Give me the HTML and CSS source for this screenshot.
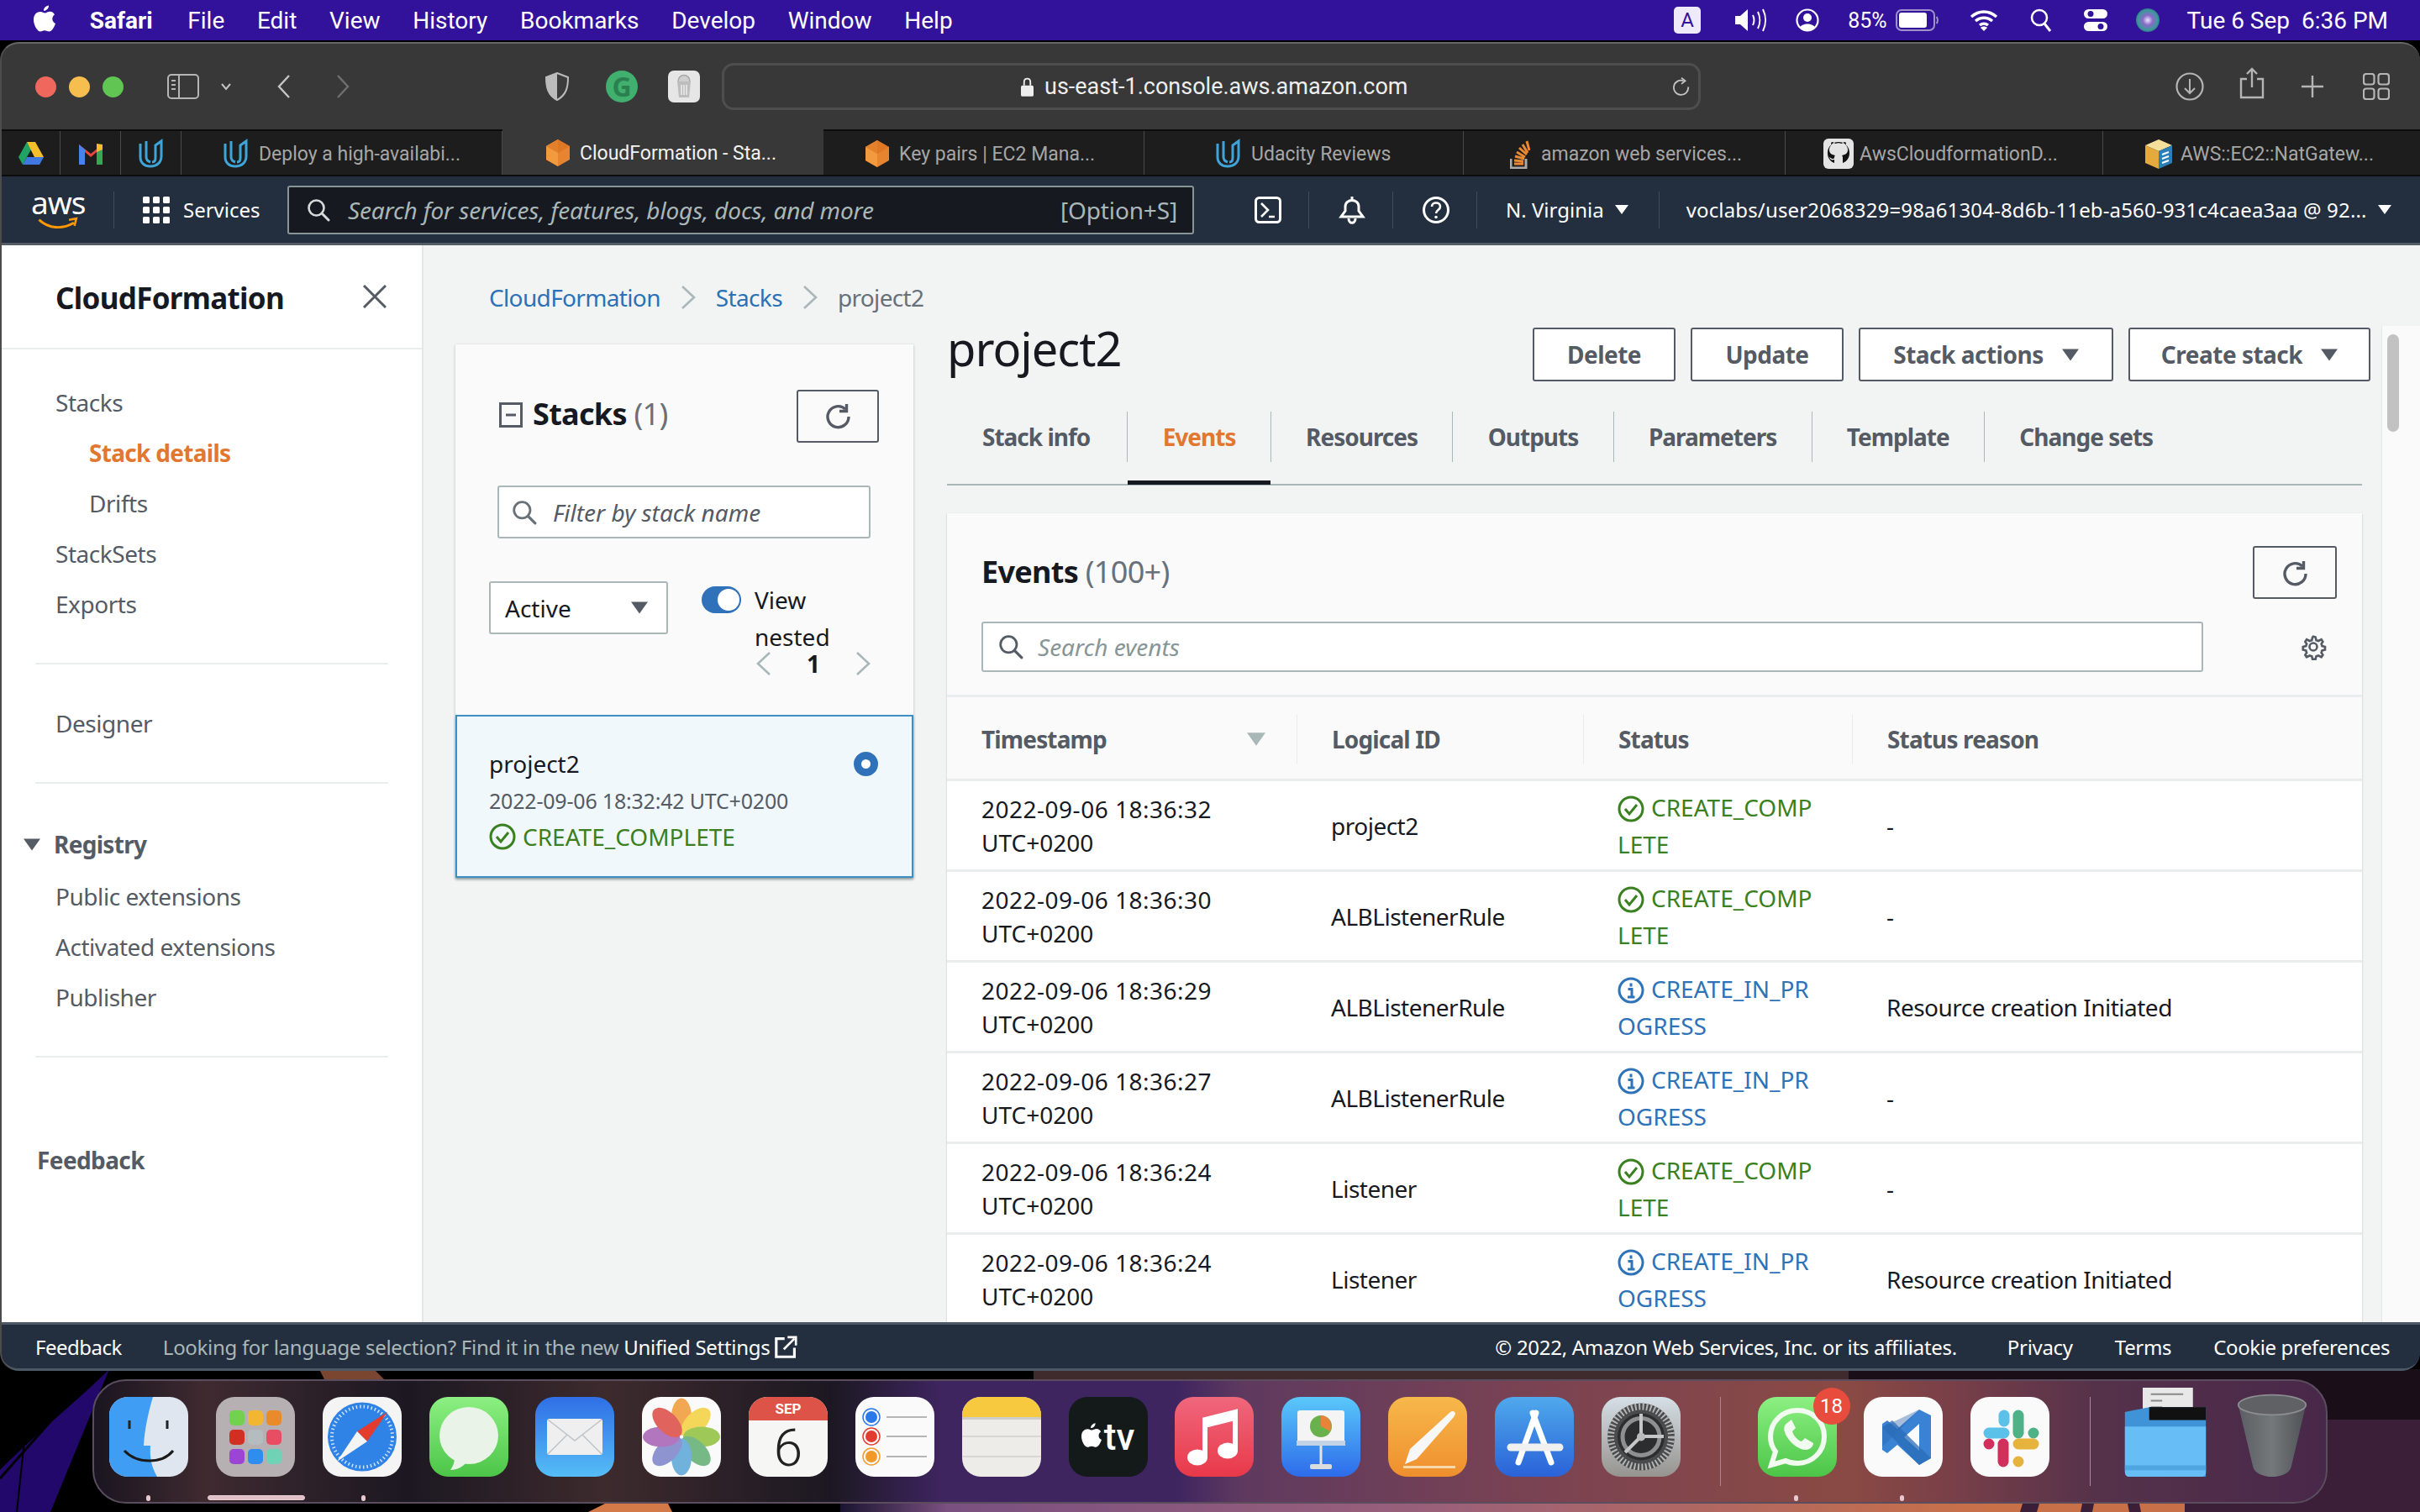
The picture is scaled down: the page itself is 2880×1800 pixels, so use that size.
FILE: index.html
```html
<!DOCTYPE html>
<html lang="en">
<head>
<meta charset="utf-8">
<title>CloudFormation - Stacks</title>
<link rel="stylesheet" href="styles.css">
</head>
<body>
<svg class="defs" aria-hidden="true">
  <defs>
    <linearGradient id="gBlue" x1="0" y1="0" x2="0" y2="1"><stop offset="0" stop-color="#2f6fe6"/><stop offset="1" stop-color="#55bdf7"/></linearGradient>
    <linearGradient id="gBlue2" x1="0" y1="0" x2="0" y2="1"><stop offset="0" stop-color="#5ac8fa"/><stop offset="1" stop-color="#2d6bea"/></linearGradient>
    <linearGradient id="gGreen" x1="0" y1="0" x2="0" y2="1"><stop offset="0" stop-color="#8cf082"/><stop offset="1" stop-color="#4cc548"/></linearGradient>
    <linearGradient id="gMusic" x1="0" y1="0" x2="0" y2="1"><stop offset="0" stop-color="#f0677c"/><stop offset="1" stop-color="#e8394a"/></linearGradient>
    <linearGradient id="gPages" x1="0" y1="0" x2="0" y2="1"><stop offset="0" stop-color="#f7b84a"/><stop offset="1" stop-color="#ef8f2e"/></linearGradient>
    <linearGradient id="gGray" x1="0" y1="0" x2="0" y2="1"><stop offset="0" stop-color="#d5dfe6"/><stop offset="1" stop-color="#96948f"/></linearGradient>
    <linearGradient id="gTrash" x1="0" y1="0" x2="1" y2="0"><stop offset="0" stop-color="#5b5f63"/><stop offset=".5" stop-color="#74787b"/><stop offset="1" stop-color="#4e5256"/></linearGradient>
    <linearGradient id="gAppStore" x1="0" y1="0" x2="0" y2="1"><stop offset="0" stop-color="#4fa9ec"/><stop offset="1" stop-color="#2a62d8"/></linearGradient>
    <linearGradient id="gStrip" x1="0" y1="0" x2="1" y2="0"><stop offset="0" stop-color="#1a1430"/><stop offset=".08" stop-color="#7a5080"/><stop offset=".44" stop-color="#9a607a"/><stop offset=".69" stop-color="#b5695c"/><stop offset=".85" stop-color="#c87048"/><stop offset="1" stop-color="#c87048"/></linearGradient>
    <symbol id="u-logo" viewBox="0 0 32 36"><path d="M3 6v16c0 7 5 11 12 11 8 0 13-5 13-12V3l-7 5v15c0 3-1 5-4 5" fill="none" stroke="#3fa4d8" stroke-width="3"/><path d="M10 3v19c0 3 2 5 5 6" fill="none" stroke="#3fa4d8" stroke-width="3"/></symbol>
    <symbol id="aws-cube" viewBox="0 0 30 34"><path d="M15 1 29 9v16l-14 8L1 25V9z" fill="#e8832f"/><path d="M15 1v32L1 25V9z" fill="#f19a3e"/><path d="M15 1 29 9l-14 8L1 9z" fill="#d9701f" opacity=".6"/></symbol>
    <symbol id="search" viewBox="0 0 28 28"><circle cx="11.500" cy="11.500" r="9" fill="none" stroke="currentColor" stroke-width="2.600"/><path d="m18 18 8 8" stroke="currentColor" stroke-width="3" stroke-linecap="round"/></symbol>
    <symbol id="refresh" viewBox="0 0 32 32"><path d="M25 8a12.500 12.500 0 1 0 4 9" fill="none" stroke="currentColor" stroke-width="3.400"/><path d="M26.500 2v8.500H18" fill="none" stroke="currentColor" stroke-width="3.400"/></symbol>
    <symbol id="caret" viewBox="0 0 20 16"><path d="M0 1h20L10 15z" fill="currentColor"/></symbol>
    <symbol id="ok" viewBox="0 0 32 32"><circle cx="16" cy="16" r="14" fill="none" stroke="currentColor" stroke-width="3"/><path d="m9 16 5 6 9-11" fill="none" stroke="currentColor" stroke-width="3"/></symbol>
    <symbol id="info" viewBox="0 0 32 32"><circle cx="16" cy="16" r="14" fill="none" stroke="currentColor" stroke-width="3"/><path d="M16 7.500v4M12.500 14.500H17v9M12 24h8.500" fill="none" stroke="currentColor" stroke-width="3"/></symbol>
    <symbol id="chev-r" viewBox="0 0 18 30"><path d="m2 2 14 13L2 28" fill="none" stroke="currentColor" stroke-width="2.600"/></symbol>
    <symbol id="chev-l" viewBox="0 0 18 30"><path d="M16 2 2 15l14 13" fill="none" stroke="currentColor" stroke-width="2.600"/></symbol>
  </defs>
</svg>

<div class="screen">
  <svg class="wallpaper" viewBox="0 0 2880 170" preserveAspectRatio="none" aria-hidden="true">
    <rect width="2880" height="170" fill="#000"/>
    <path d="M0 120C50 70 90 40 130 0L60 170H0z" fill="#22086b"/>
    <path d="M0 130 115 0" stroke="#000" stroke-width="3"/>
    <path d="M20 170 38 0" stroke="#000" stroke-width="2"/>
    <path d="M380 0h65l20 20H390z" fill="#7a4630"/>
    <path d="M700 170l50-25 40 5 10 20z" fill="#d47a48"/>
    <rect x="1230" width="970" height="30" fill="#3f2a2e"/>
    <rect x="2200" width="680" height="170" fill="#1a0f18"/>
    <rect x="2600" y="60" width="280" height="110" fill="#3b1f38"/>
    <rect x="1000" y="150" width="1600" height="20" fill="url(#gStrip)"/>
    <path d="M2410 150h20l-6 20h-20zM2480 150h14l-4 20h-14zM2530 150h14l4 20h-14z" fill="#3b1f38"/>
  </svg>

  <header class="menubar">
    <div class="menu-left">
      <svg class="apple" viewBox="0 0 26 32"><path d="M18 0c.3 3-2.500 6.500-6 6.300C11.700 3.200 15 .3 18 0zM25 11c-4 2.500-3.500 8.500 1 10.500-1.500 4.500-4.500 9.500-7.500 9.500-2 0-3-1.300-5.500-1.300S10 31 8 31C4.500 31 0 23.500 0 17 0 10.500 4 7.500 8 7.500c2.300 0 4 1.500 5.500 1.500s3.500-1.700 6-1.700c2 0 4.200 1 5.500 3.700z" fill="#fff"/></svg>
      <b class="mi-app">Safari</b>
      <span>File</span><span>Edit</span><span>View</span><span>History</span><span>Bookmarks</span><span>Develop</span><span>Window</span><span>Help</span>
    </div>
    <div class="menu-right">
      <span class="kbd">A</span>
      <svg class="st-speaker" viewBox="0 0 38 28"><path d="M1 9h6l9-8v26l-9-8H1z" fill="#fff"/><path d="M22 8c2 4 2 8 0 12M28 4c3 6 3 14 0 20M34 1c4 8 4 18 0 26" fill="none" stroke="#fff" stroke-width="2"/></svg>
      <svg class="st-user" viewBox="0 0 28 28"><circle cx="14" cy="14" r="12.500" fill="none" stroke="#fff" stroke-width="2.200"/><circle cx="14" cy="11" r="5" fill="#fff"/><path d="M5 23c2-6 16-6 18 0-4 4-14 4-18 0z" fill="#fff"/></svg>
      <span class="pct">85%</span>
      <svg class="st-battery" viewBox="0 0 52 26"><rect x="1" y="1" width="45" height="24" rx="6" fill="none" stroke="#9e93c9" stroke-width="2"/><rect x="4" y="4" width="33" height="18" rx="3" fill="#fff"/><path d="M48.500 9c2 2 2 6 0 8" fill="none" stroke="#9e93c9" stroke-width="2"/></svg>
      <svg class="st-wifi" viewBox="0 0 34 26"><path d="M2 9c9-8 21-8 30 0M7 14c6-5 14-5 20 0M12 19c3-2.500 7-2.500 10 0" fill="none" stroke="#fff" stroke-width="3.400"/><path d="m17 26-4-4c2-2 6-2 8 0z" fill="#fff"/></svg>
      <svg class="st-search" viewBox="0 0 26 28"><circle cx="11" cy="11" r="9" fill="none" stroke="#fff" stroke-width="2.500"/><path d="m17 18 7 9" stroke="#fff" stroke-width="3"/></svg>
      <svg class="st-cc" viewBox="0 0 28 28"><rect x="0" y="1" width="28" height="11" rx="5.500" fill="#fff"/><circle cx="8" cy="6.500" r="3.500" fill="#33129b"/><rect x="0" y="16" width="28" height="11" rx="5.500" fill="#fff"/><circle cx="20" cy="21.500" r="3.500" fill="#33129b"/></svg>
      <span class="siri"></span>
      <span class="clock">Tue 6 Sep&nbsp; 6:36 PM</span>
    </div>
  </header>

  <div class="window">
    <div class="toolbar">
      <div class="lights"><i class="l-red"></i><i class="l-yellow"></i><i class="l-green"></i></div>
      <svg class="tb-sidebar" viewBox="0 0 38 30"><rect x="1" y="1" width="36" height="28" rx="4" fill="none" stroke="#b5b5b5" stroke-width="2"/><path d="M14 1v28" stroke="#b5b5b5" stroke-width="2"/><path d="M5 8h5M5 13h5M5 18h5" stroke="#b5b5b5" stroke-width="2"/></svg>
      <svg class="tb-drop" viewBox="0 0 14 10"><path d="m2 2 5 6 5-6" fill="none" stroke="#c4c4c4" stroke-width="2"/></svg>
      <svg class="tb-back" viewBox="0 0 18 30"><path d="M15 2 3 15l12 13" fill="none" stroke="#c4c4c4" stroke-width="2.400"/></svg>
      <svg class="tb-fwd" viewBox="0 0 18 30"><path d="m3 2 12 13L3 28" fill="none" stroke="#6f6f6f" stroke-width="2.400"/></svg>
      <svg class="tb-shield" viewBox="0 0 28 34"><path d="M14 1 27 6c0 12-2 21-13 27C3 27 1 18 1 6z" fill="#3c3c3c" stroke="#bbb" stroke-width="2"/><path d="M14 1 1 6c0 12 2 21 13 27z" fill="#bbb"/></svg>
      <span class="tb-g">G</span>
      <svg class="tb-bag" viewBox="0 0 38 38"><rect width="38" height="38" rx="7" fill="#e6e6e6"/><path d="M11 13h16l-2 19H13z" fill="#bdbdbd"/><path d="M12 13c0-10 14-10 14 0" fill="#cfcfcf" stroke="#a9a9a9" stroke-width="1.500"/><path d="M16 17v12M19 17v12M22 17v12" stroke="#eee" stroke-width="1.500"/></svg>
      <div class="urlbar">
        <svg class="lock" viewBox="0 0 16 24"><path d="M4 10V6c0-6 8-6 8 0v4" fill="none" stroke="#eee" stroke-width="2"/><rect y="10" width="16" height="14" rx="2" fill="#eee"/></svg>
        <span class="url">us-east-1.console.aws.amazon.com</span>
        <svg class="reload" viewBox="0 0 22 26"><path d="M14 5a9.500 9.500 0 1 0 6 8" fill="none" stroke="#c4c4c4" stroke-width="2"/><path d="M11 1l5 4-5 4" fill="none" stroke="#c4c4c4" stroke-width="2"/></svg>
      </div>
      <svg class="tb-dl" viewBox="0 0 34 34"><circle cx="17" cy="17" r="15.500" fill="none" stroke="#b5b5b5" stroke-width="2.200"/><path d="M17 8v17M11 19l6 6 6-6" fill="none" stroke="#b5b5b5" stroke-width="2"/></svg>
      <svg class="tb-share" viewBox="0 0 30 38"><path d="M9 14H2v22h26V14h-7" fill="none" stroke="#b5b5b5" stroke-width="2.400"/><path d="M15 24V2M9 8l6-6 6 6" fill="none" stroke="#b5b5b5" stroke-width="2.400"/></svg>
      <svg class="tb-plus" viewBox="0 0 26 26"><path d="M13 0v26M0 13h26" stroke="#b5b5b5" stroke-width="2.400"/></svg>
      <svg class="tb-grid" viewBox="0 0 32 32"><g fill="none" stroke="#b5b5b5" stroke-width="2.200"><rect x="1" y="1" width="12.500" height="12.500" rx="3"/><rect x="18.500" y="1" width="12.500" height="12.500" rx="3"/><rect x="1" y="18.500" width="12.500" height="12.500" rx="3"/><rect x="18.500" y="18.500" width="12.500" height="12.500" rx="3"/></g></svg>
    </div>

    <div class="tabbar">
      <div class="tab tab-pin">
        <svg class="fav-pin" viewBox="0 0 32 30"><path d="M11 1 1 19l5 9 10-18z" fill="#1fa463"/><path d="M21 1 31 19H20L11 1z" fill="#f5bf2c"/><path d="M6 28 11 19h20l-5 9z" fill="#3f78e0"/></svg>
      </div>
      <div class="tab tab-pin">
        <svg class="fav-pin" viewBox="0 0 32 28"><path d="M2 27V3l14 11L30 3v24h-7V12l-7 6-7-6v15z" fill="#e5483a"/><path d="M2 27V3l7 6v18z" fill="#4683ea"/><path d="M30 27V3l-7 6v18z" fill="#35a853"/><path d="m23 2 7 1v6l-7 3z" fill="#f5bd2c"/></svg>
      </div>
      <div class="tab tab-pin"><svg class="fav-u"><use href="#u-logo"/></svg></div>
      <div class="tab"><svg class="fav-u"><use href="#u-logo"/></svg><span>Deploy a high-availabi...</span></div>
      <div class="tab tab-active"><svg class="fav-c"><use href="#aws-cube"/></svg><span>CloudFormation - Sta...</span></div>
      <div class="tab"><svg class="fav-c"><use href="#aws-cube"/></svg><span>Key pairs | EC2 Mana...</span></div>
      <div class="tab tab-w84"><svg class="fav-u"><use href="#u-logo"/></svg><span>Udacity Reviews</span></div>
      <div class="tab tab-w55">
        <svg class="fav-so" viewBox="0 0 24 36"><path d="M1 24v11h18V24" fill="none" stroke="#aaa" stroke-width="3"/><path d="M5 30h11M5 26l11 1M6 21l11 3M8 16l10 6M11 11l9 8M15 7l6 10M20 3l3 11" stroke="#e88933" stroke-width="3"/></svg>
        <span>amazon web services...</span>
      </div>
      <div class="tab tab-w45">
        <svg class="fav-gh" viewBox="0 0 36 36"><rect width="36" height="36" rx="6" fill="#e4e4e4"/><path d="M18 4C10 4 5 10 5 17c0 6 3 10 8 12v-4c-3 1-5 0-6-3 3 2 5 3 6 1 0-1 0-2 1-3-5-1-7-3-7-7 0-2 1-4 2-5 0-2 0-3 1-4 2 0 3 1 4 2 3-1 5-1 8 0 1-1 2-2 4-2 1 1 1 2 1 4 1 1 2 3 2 5 0 4-2 6-7 7 1 1 1 2 1 4v5c5-2 8-6 8-12 0-7-5-13-13-13z" fill="#111"/></svg>
        <span>AwsCloudformationD...</span>
      </div>
      <div class="tab tab-w49">
        <svg class="fav-box" viewBox="0 0 34 36"><path d="M17 1 33 8 17 15 1 8z" fill="#f6df9b"/><path d="M1 8l16 7v21L1 29z" fill="#e5aa3d"/><path d="M33 8 17 15v21l16-7z" fill="#2b7fb8"/><path d="M21 19l8-3M21 24l8-3M21 29l8-3" stroke="#fff" stroke-width="2"/></svg>
        <span>AWS::EC2::NatGatew...</span>
      </div>
    </div>

    <nav class="awsnav">
      <div class="aws-logo">
        <span class="aws-word">aws</span>
        <svg class="aws-smile" viewBox="0 0 64 22"><path d="M1 5c16 15 38 16 57 5" fill="none" stroke="#f90" stroke-width="4"/><path d="M50 5l12-2-3 12" fill="none" stroke="#f90" stroke-width="3.500"/></svg>
      </div>
      <i class="nav-sep"></i>
      <svg class="nav-grid" viewBox="0 0 32 32"><g fill="#fff"><rect width="8" height="8" rx="1.500"/><rect x="12" width="8" height="8" rx="1.500"/><rect x="24" width="8" height="8" rx="1.500"/><rect y="12" width="8" height="8" rx="1.500"/><rect x="12" y="12" width="8" height="8" rx="1.500"/><rect x="24" y="12" width="8" height="8" rx="1.500"/><rect y="24" width="8" height="8" rx="1.500"/><rect x="12" y="24" width="8" height="8" rx="1.500"/><rect x="24" y="24" width="8" height="8" rx="1.500"/></g></svg>
      <span class="nav-services">Services</span>
      <div class="nav-search">
        <svg class="nav-search-ic"><use href="#search"/></svg>
        <em>Search for services, features, blogs, docs, and more</em>
        <span>[Option+S]</span>
      </div>
      <svg class="nav-term" viewBox="0 0 32 32"><rect x="1.500" y="1.500" width="29" height="29" rx="4" fill="none" stroke="#fff" stroke-width="3"/><path d="m8 8 8 8-8 8M17 24h7" fill="none" stroke="#fff" stroke-width="2.600"/></svg>
      <i class="nav-sep nav-sep-a"></i>
      <svg class="nav-bell" viewBox="0 0 32 34"><path d="M16 1v4M3 25h26l-5-7v-5c0-10-16-10-16 0v5zM12 27c0 7 8 7 8 0" fill="none" stroke="#fff" stroke-width="3"/></svg>
      <i class="nav-sep nav-sep-a"></i>
      <svg class="nav-help" viewBox="0 0 32 32"><circle cx="16" cy="16" r="14.500" fill="none" stroke="#fff" stroke-width="3"/><path d="M11 12c0-6 10-6 10 0 0 4-5 4-5 8" fill="none" stroke="#fff" stroke-width="2.600"/><circle cx="16" cy="24.500" r="1.800" fill="#fff"/></svg>
      <i class="nav-sep nav-sep-a"></i>
      <span class="nav-region">N. Virginia</span>
      <svg class="nav-caret"><use href="#caret"/></svg>
      <i class="nav-sep nav-sep-b"></i>
      <span class="nav-account">voclabs/user2068329=98a61304-8d6b-11eb-a560-931c4caea3aa @ 92...</span>
      <svg class="nav-caret nav-caret-b"><use href="#caret"/></svg>
    </nav>

    <div class="app">
      <aside class="side">
        <div class="side-head">
          <h2>CloudFormation</h2>
          <svg class="side-x" viewBox="0 0 28 28"><path d="m1 1 26 26M27 1 1 27" stroke="#545b64" stroke-width="3"/></svg>
        </div>
        <ul class="side-list side-first">
          <li>Stacks</li>
          <li class="sub active">Stack details</li>
          <li class="sub">Drifts</li>
          <li>StackSets</li>
          <li>Exports</li>
        </ul>
        <hr class="side-hr">
        <ul class="side-list"><li>Designer</li></ul>
        <hr class="side-hr">
        <div class="side-reg"><svg><use href="#caret"/></svg><b>Registry</b></div>
        <ul class="side-list side-reglist">
          <li>Public extensions</li>
          <li>Activated extensions</li>
          <li>Publisher</li>
        </ul>
        <hr class="side-hr side-hr-c">
        <b class="side-fb">Feedback</b>
      </aside>

      <main class="main">
        <div class="crumbs">
          <a>CloudFormation</a><svg class="crumb-ch"><use href="#chev-r"/></svg>
          <a>Stacks</a><svg class="crumb-ch"><use href="#chev-r"/></svg>
          <span>project2</span>
        </div>
        <div class="columns">
          <section class="stacks">
            <div class="stacks-head">
              <svg class="minus" viewBox="0 0 28 30"><rect x="1.500" y="1.500" width="25" height="27" fill="none" stroke="#545b64" stroke-width="3"/><path d="M8 15h12" stroke="#545b64" stroke-width="3"/></svg>
              <h3>Stacks <span>(1)</span></h3>
              <button class="icon-btn"><svg><use href="#refresh"/></svg></button>
            </div>
            <div class="filter"><svg><use href="#search"/></svg><em>Filter by stack name</em></div>
            <div class="stacks-ctrl">
              <div class="select"><span>Active</span><svg><use href="#caret"/></svg></div>
              <span class="toggle"><i></i></span>
              <div class="nested">View<br>nested</div>
            </div>
            <div class="pager">
              <svg><use href="#chev-l"/></svg><b>1</b><svg><use href="#chev-r"/></svg>
            </div>
            <div class="stack-card">
              <div class="card-top"><span>project2</span><i class="radio"></i></div>
              <div class="card-date">2022-09-06 18:32:42 UTC+0200</div>
              <div class="card-status"><svg><use href="#ok"/></svg>CREATE_COMPLETE</div>
            </div>
          </section>

          <section class="detail">
            <div class="detail-head">
              <h1>project2</h1>
              <div class="actions">
                <button class="btn btn-del">Delete</button>
                <button class="btn btn-upd">Update</button>
                <button class="btn btn-act">Stack actions<svg><use href="#caret"/></svg></button>
                <button class="btn btn-cre">Create stack<svg><use href="#caret"/></svg></button>
              </div>
            </div>
            <div class="tabs">
              <span class="t">Stack info</span>
              <span class="t t-on">Events</span>
              <span class="t">Resources</span>
              <span class="t">Outputs</span>
              <span class="t">Parameters</span>
              <span class="t">Template</span>
              <span class="t t-last">Change sets</span>
            </div>
            <div class="panel">
              <div class="panel-top">
                <h3>Events <span>(100+)</span></h3>
                <button class="icon-btn"><svg><use href="#refresh"/></svg></button>
              </div>
              <div class="panel-search">
                <div class="ev-search"><svg><use href="#search"/></svg><em>Search events</em></div>
                <svg class="gear" viewBox="0 0 32 32"><path d="M16 2l3 1 1 4 3 1 4-2 2 3-2 3 1 3 4 1v4l-4 1-1 3 2 3-2 3-4-2-3 1-1 4h-4l-1-4-3-1-4 2-2-3 2-3-1-3-4-1v-4l4-1 1-3-2-3 2-3 4 2 3-1 1-4z" transform="translate(2 2) scale(.875)" fill="none" stroke="#545b64" stroke-width="3"/><circle cx="16" cy="16" r="4.500" fill="none" stroke="#545b64" stroke-width="2.600"/></svg>
              </div>
              <div class="ev-row ev-head">
                <div class="th th-first"><span>Timestamp</span><svg><use href="#caret"/></svg></div>
                <div class="th"><span>Logical ID</span></div>
                <div class="th"><span>Status</span></div>
                <div class="th th-last"><span>Status reason</span></div>
              </div>
              <div class="ev-row">
                <div class="td"><span class="when">2022-09-06 18:36:32</span><br>UTC+0200</div><div class="td nm">project2</div>
                <div class="td st ok"><svg><use href="#ok"/></svg>CREATE_COMP<br>LETE</div><div class="td nm">-</div>
              </div>
              <div class="ev-row">
                <div class="td"><span class="when">2022-09-06 18:36:30</span><br>UTC+0200</div><div class="td nm">ALBListenerRule</div>
                <div class="td st ok"><svg><use href="#ok"/></svg>CREATE_COMP<br>LETE</div><div class="td nm">-</div>
              </div>
              <div class="ev-row">
                <div class="td"><span class="when">2022-09-06 18:36:29</span><br>UTC+0200</div><div class="td nm">ALBListenerRule</div>
                <div class="td st prog"><svg><use href="#info"/></svg>CREATE_IN_PR<br>OGRESS</div><div class="td nm">Resource creation Initiated</div>
              </div>
              <div class="ev-row">
                <div class="td"><span class="when">2022-09-06 18:36:27</span><br>UTC+0200</div><div class="td nm">ALBListenerRule</div>
                <div class="td st prog"><svg><use href="#info"/></svg>CREATE_IN_PR<br>OGRESS</div><div class="td nm">-</div>
              </div>
              <div class="ev-row">
                <div class="td"><span class="when">2022-09-06 18:36:24</span><br>UTC+0200</div><div class="td nm">Listener</div>
                <div class="td st ok"><svg><use href="#ok"/></svg>CREATE_COMP<br>LETE</div><div class="td nm">-</div>
              </div>
              <div class="ev-row">
                <div class="td"><span class="when">2022-09-06 18:36:24</span><br>UTC+0200</div><div class="td nm">Listener</div>
                <div class="td st prog"><svg><use href="#info"/></svg>CREATE_IN_PR<br>OGRESS</div><div class="td nm">Resource creation Initiated</div>
              </div>
            </div>
          </section>
        </div>
        <div class="scrolltrack"><i></i></div>
      </main>
    </div>

    <footer class="foot">
      <span class="f-fb">Feedback</span>
      <span class="f-msg">Looking for language selection? Find it in the new <span class="f-link">Unified Settings</span></span>
      <svg class="f-ext" viewBox="0 0 30 30"><path d="M13 4H2v24h24V16" fill="none" stroke="#fff" stroke-width="3.500"/><path d="M12 18 26 4M17 2h11v11" fill="none" stroke="#fff" stroke-width="3"/></svg>
      <span class="f-copy">© 2022, Amazon Web Services, Inc. or its affiliates.</span>
      <span class="f-l1">Privacy</span><span class="f-l2">Terms</span><span class="f-l3">Cookie preferences</span>
    </footer>
  </div>

  <div class="dock">
    <div class="ic"><svg viewBox="0 0 94 95"><defs><clipPath id="cf"><rect width="94" height="95" rx="22"/></clipPath></defs><g clip-path="url(#cf)"><rect width="94" height="95" fill="#e0e6ef"/><path d="M0 0h52c-6 20-10 40-11 58h8c-1 13 1 25 8 37H0z" fill="#3f9df3"/></g><path d="M24 28v10M69 28v10" stroke="#222" stroke-width="3"/><path d="M18 64c15 16 45 16 58 0" fill="none" stroke="#1a1a1a" stroke-width="3"/></svg></div>
    <div class="ic"><svg viewBox="0 0 94 95"><rect width="94" height="95" rx="22" fill="#b6b0b2"/><rect x="16" y="16" width="18" height="18" rx="5" fill="#72d24f"/><rect x="38" y="16" width="18" height="18" rx="5" fill="#f2b632"/><rect x="60" y="16" width="18" height="18" rx="5" fill="#ea8b2b"/><rect x="16" y="39" width="18" height="18" rx="5" fill="#d12f22"/><rect x="38" y="39" width="18" height="18" rx="5" fill="#b4bcc0"/><rect x="60" y="39" width="18" height="18" rx="5" fill="#e84d63"/><rect x="16" y="62" width="18" height="18" rx="5" fill="#9c45d4"/><rect x="38" y="62" width="18" height="18" rx="5" fill="#2f8df0"/><rect x="60" y="62" width="18" height="18" rx="5" fill="#6dd3b4"/></svg></div>
    <div class="ic"><svg viewBox="0 0 94 95"><rect width="94" height="95" rx="22" fill="#f4f4f4"/><circle cx="47" cy="47.500" r="41" fill="#2f82e6"/><circle cx="47" cy="47.500" r="36" fill="none" stroke="#cfe4fb" stroke-width="4" stroke-dasharray="1.500 3"/><path d="M77 18 41 41l12 12z" fill="#e33b2e"/><path d="M17 77 41 41l12 12z" fill="#f4f4f4"/></svg></div>
    <div class="ic"><svg viewBox="0 0 94 95"><rect width="94" height="95" rx="22" fill="url(#gGreen)"/><ellipse cx="47" cy="46" rx="35" ry="34" fill="#e9f3e8"/><path d="M30 72c0 6-2 11-5 15 8 0 15-4 19-9z" fill="#e9f3e8"/></svg></div>
    <div class="ic"><svg viewBox="0 0 94 95"><rect width="94" height="95" rx="22" fill="url(#gBlue)"/><rect x="14" y="26" width="66" height="43" rx="3" fill="#efefef"/><path d="M15 27 47 52 79 27M15 68 38 45M79 68 56 45" fill="none" stroke="#bfc3c7" stroke-width="1.500"/></svg></div>
    <div class="ic"><svg viewBox="0 0 94 95"><rect width="94" height="95" rx="22" fill="#fafafa"/><g transform="translate(47 47.500)" opacity=".85"><ellipse cy="-24" rx="12" ry="22" fill="#f19a35"/><ellipse cy="-24" rx="12" ry="22" fill="#f4d23c" transform="rotate(45)"/><ellipse cy="-24" rx="12" ry="22" fill="#8ec03b" transform="rotate(90)"/><ellipse cy="-24" rx="12" ry="22" fill="#5fae72" transform="rotate(135)"/><ellipse cy="-24" rx="12" ry="22" fill="#5aa6d8" transform="rotate(180)"/><ellipse cy="-24" rx="12" ry="22" fill="#7a83c9" transform="rotate(225)"/><ellipse cy="-24" rx="12" ry="22" fill="#a660b5" transform="rotate(270)"/><ellipse cy="-24" rx="12" ry="22" fill="#dc4a42" transform="rotate(315)"/></g></svg></div>
    <div class="ic ic-cal"><span class="cal-m">SEP</span><span class="cal-d">6</span></div>
    <div class="ic"><svg viewBox="0 0 94 95"><rect width="94" height="95" rx="22" fill="#fafafa"/><circle cx="19" cy="24" r="7" fill="#2b78e8"/><circle cx="19" cy="24" r="10" fill="none" stroke="#2b78e8" stroke-width="1.500"/><circle cx="19" cy="47" r="7" fill="#e23c30"/><circle cx="19" cy="47" r="10" fill="none" stroke="#e23c30" stroke-width="1.500"/><circle cx="19" cy="71" r="7" fill="#ef9a2b"/><circle cx="19" cy="71" r="10" fill="none" stroke="#ef9a2b" stroke-width="1.500"/><path d="M37 24h48M37 47h48M37 71h48" stroke="#b5b5b5" stroke-width="2"/></svg></div>
    <div class="ic"><svg viewBox="0 0 94 95"><defs><clipPath id="cn"><rect width="94" height="95" rx="22"/></clipPath></defs><g clip-path="url(#cn)"><rect width="94" height="95" fill="#eeece9"/><rect width="94" height="24" fill="#f6c93e"/><rect y="24" width="94" height="3" fill="#cfcdc8"/><path d="M0 47h94M0 71h94" stroke="#d8d6d2" stroke-width="2"/></g></svg></div>
    <div class="ic ic-tv"><svg class="tv-apple" viewBox="0 0 26 32"><path d="M18 0c.3 3-2.500 6.500-6 6.300C11.700 3.200 15 .3 18 0zM25 11c-4 2.500-3.500 8.500 1 10.500-1.500 4.500-4.500 9.500-7.500 9.500-2 0-3-1.300-5.500-1.300S10 31 8 31C4.500 31 0 23.500 0 17 0 10.500 4 7.500 8 7.500c2.300 0 4 1.500 5.500 1.500s3.500-1.700 6-1.700c2 0 4.200 1 5.500 3.700z" fill="#fff"/></svg><span>tv</span></div>
    <div class="ic"><svg viewBox="0 0 94 95"><rect width="94" height="95" rx="22" fill="url(#gMusic)"/><path d="M36 72V27l36-9v46" fill="none" stroke="#fff" stroke-width="6"/><path d="M36 25 72 16v12L36 37z" fill="#fff"/><ellipse cx="27" cy="72" rx="12" ry="9.500" fill="#fff"/><ellipse cx="63" cy="64" rx="12" ry="9.500" fill="#fff"/></svg></div>
    <div class="ic"><svg viewBox="0 0 94 95"><rect width="94" height="95" rx="22" fill="url(#gBlue2)"/><rect x="19" y="16" width="56" height="40" rx="3" fill="#f4f4f4"/><circle cx="47" cy="35" r="13" fill="#6ab04c"/><path d="M47 35V22a13 13 0 0 1 11 19z" fill="#e8833a"/><rect x="18" y="52" width="58" height="6" fill="#c2d3e6"/><path d="M47 58v26" stroke="#e4e4e4" stroke-width="3"/><rect x="34" y="80" width="26" height="6" rx="2" fill="#dcdcdc"/></svg></div>
    <div class="ic"><svg viewBox="0 0 94 95"><rect width="94" height="95" rx="22" fill="url(#gPages)"/><path d="M80 20c0-3-4-4-6-2L26 62l-6 18 14-6 44-50z" fill="#f7f7f7"/><path d="M18 82h62v3H18z" fill="#f8d9ac"/></svg></div>
    <div class="ic"><svg viewBox="0 0 94 95"><rect width="94" height="95" rx="22" fill="url(#gAppStore)"/><path d="M49 19 28 78M45 19l22 59" stroke="#fff" stroke-width="7" stroke-linecap="round"/><path d="M19 60h58" stroke="#f0f0f0" stroke-width="9" stroke-linecap="round"/></svg></div>
    <div class="ic"><svg viewBox="0 0 94 95"><rect width="94" height="95" rx="22" fill="url(#gGray)"/><circle cx="47" cy="47.500" r="40" fill="#4a4b4d"/><circle cx="47" cy="47.500" r="36" fill="none" stroke="#b5b5b5" stroke-width="8" stroke-dasharray="2 2.500"/><circle cx="47" cy="47.500" r="28" fill="#2c2d2f"/><circle cx="47" cy="47.500" r="22" fill="none" stroke="#8e8f90" stroke-width="5"/><path d="M47 47 47 20M47 47 74 47M47 47 28 66" stroke="#c6c6c6" stroke-width="4"/><circle cx="47" cy="47.500" r="5" fill="#bbb"/></svg></div>
    <i class="dock-sep dock-sep-a"></i>
    <div class="ic ic-wa"><svg viewBox="0 0 94 95"><rect width="94" height="95" rx="22" fill="url(#gGreen)"/><path d="M47 16c-18 0-32 14-32 31 0 7 2 13 6 18l-5 16 17-5c4 2 9 3 14 3 18 0 32-14 32-32S65 16 47 16z" fill="none" stroke="#f2fbef" stroke-width="6"/><path d="M35 31c-5 3-5 10 0 17 5 8 14 15 22 15 5 0 9-4 9-8l-10-6-4 4c-4-1-10-7-11-12l4-4-5-10z" fill="#f2fbef"/></svg><span class="badge">18</span></div>
    <div class="ic"><svg viewBox="0 0 94 95"><rect width="94" height="95" rx="22" fill="#fafafa"/><path d="M66 15 80 22v51l-14 8-26-24-12 10-6-4V32l6-4 12 10z" fill="#3a82d4"/><path d="M66 15 28 54l-6 5V36z" fill="#2a64ad" opacity=".4"/><path d="m66 32-18 16 18 16z" fill="#fafafa"/><path d="M22 36 66 81 80 73 34 28z" fill="#2a6cb8" opacity=".75"/></svg></div>
    <div class="ic"><svg viewBox="0 0 94 95"><rect width="94" height="95" rx="22" fill="#fafafa"/><g stroke-linecap="round" stroke-width="13" fill="none"><path d="M40 43H22" stroke="#5cc1e8"/><path d="M40 22v7" stroke="#5cc1e8"/><path d="M57 22v21M75 43h0" stroke="#4fb286"/><path d="M22 56h0M39 56v21" stroke="#d0305b"/><path d="M57 56h18M57 77v0" stroke="#e6b33d"/></g></svg></div>
    <i class="dock-sep dock-sep-b"></i>
    <div class="ic ic-folder"><svg viewBox="0 0 100 110"><rect x="22" y="0" width="62" height="50" fill="#e8e8e8"/><path d="M32 8h40M32 16h14M32 24h14" stroke="#888" stroke-width="2"/><path d="M0 30 30 24h70v86H6c-4 0-6-2-6-6z" fill="#3f93d6"/><rect x="30" y="24" width="70" height="16" fill="#111"/><path d="M0 48h100v56c0 4-2 6-6 6H6c-4 0-6-2-6-6z" fill="#67bdf5"/><rect y="96" width="100" height="6" fill="#4fa5e0"/></svg></div>
    <div class="ic ic-trash"><svg viewBox="0 0 94 110"><path d="M3 14 22 94c4 18 46 18 50 0L91 14z" fill="url(#gTrash)"/><ellipse cx="47" cy="14" rx="44" ry="13" fill="#5f6164" stroke="#8b8d90" stroke-width="2"/></svg></div>
    <i class="dot dot-1"></i><i class="dot-bar"></i><i class="dot dot-2"></i><i class="dot dot-3"></i><i class="dot dot-4"></i>
  </div>
</div>
</body>
</html>
```
FILE: styles.css
```css
* { box-sizing: border-box; }
html, body { margin: 0; padding: 0; background: #000; }
body { width: 2880px; height: 1800px; overflow: hidden; font-family: "Noto Sans", "Liberation Sans", sans-serif; color: #16191f; }
svg { display: block; flex: none; }
ul { list-style: none; margin: 0; padding: 0; }
h1, h2, h3 { margin: 0; }
button { font-family: inherit; }
em { font-style: italic; }
.defs { position: absolute; width: 0; height: 0; }

.screen { position: relative; width: 2880px; height: 1800px; overflow: hidden; display: flex; flex-direction: column; }
.wallpaper { position: absolute; left: 0; bottom: 0; width: 2880px; height: 170px; }

/* Menu bar */
.menubar { position: relative; height: 48px; background: #33129b; color: #fff; display: flex; justify-content: space-between; align-items: center; font-family: Roboto, sans-serif; font-size: 28px; flex: none; }
.menu-left { display: flex; align-items: center; gap: 38.700px; padding-left: 40px; }
.apple { width: 26px; height: 33px; margin-right: 2px; margin-top: -4px; }
.mi-app { font-weight: 700; margin-right: 3px; }
.menu-right { display: flex; align-items: center; padding-right: 38px; }
.kbd { width: 32px; height: 32px; background: #efeaf9; color: #33129b; border-radius: 5px; text-align: center; line-height: 32px; font-size: 24px; }
.st-speaker { width: 38px; height: 28px; margin-left: 40px; }
.st-user { width: 28px; height: 28px; margin-left: 35px; }
.pct { margin-left: 34px; font-size: 25px; }
.st-battery { width: 52px; height: 26px; margin-left: 10px; }
.st-wifi { width: 34px; height: 26px; margin-left: 36px; }
.st-search { width: 26px; height: 28px; margin-left: 38px; }
.st-cc { width: 28px; height: 28px; margin-left: 38px; }
.siri { width: 28px; height: 28px; margin-left: 34px; border-radius: 50%; background: radial-gradient(circle at 50% 50%, #e8e8ff 0, #8a6ac8 30%, #3a9a9c 60%, #2a1a60 100%); }
.clock { margin-left: 33px; }

/* Window */
.window { position: relative; margin-top: 2px; height: 1582px; flex: none; background: #383838; border-top: 2px solid #666; border-left: 2px solid #4c4c4c; border-radius: 22px; overflow: hidden; display: flex; flex-direction: column; }
.toolbar { height: 102px; flex: none; display: flex; align-items: center; color: #eee; }
.lights { display: flex; gap: 15px; margin-left: 40px; }
.lights i { display: block; width: 25px; height: 25px; border-radius: 50%; }
.l-red { background: #f0675d; }
.l-yellow { background: #f5be4f; }
.l-green { background: #61c554; }
.tb-sidebar { width: 38px; height: 30px; margin-left: 52px; }
.tb-drop { width: 14px; height: 10px; margin-left: 25px; }
.tb-back { width: 18px; height: 30px; margin-left: 53px; }
.tb-fwd { width: 18px; height: 30px; margin-left: 52px; }
.tb-shield { width: 28px; height: 34px; margin-left: 232px; }
.tb-g { width: 38px; height: 38px; margin-left: 44px; border-radius: 50%; background: #41b06e; color: #2b8050; font: 700 32px/38px "Noto Sans", sans-serif; text-align: center; }
.tb-bag { width: 38px; height: 38px; margin-left: 36px; }
.urlbar { width: 1165px; height: 56px; margin-left: 26px; border: 3px solid #4e4e4e; border-radius: 14px; display: flex; align-items: center; padding: 0 10px 0 353px; }
.lock { width: 15px; height: 23px; }
.url { margin-left: 13px; font: 27px Roboto, sans-serif; color: #eee; }
.reload { width: 20px; height: 25px; margin-left: auto; }
.tb-dl { width: 34px; height: 34px; margin-left: 565px; }
.tb-share { width: 30px; height: 38px; margin-left: 42px; margin-top: -8px; }
.tb-plus { width: 26px; height: 26px; margin-left: 44px; }
.tb-grid { width: 32px; height: 32px; margin-left: 47px; }

.tabbar { height: 56px; flex: none; background: #1d1d1d; border-top: 2px solid #0c0c0c; border-bottom: 2px solid #0c0c0c; display: flex; font: 23px Roboto, sans-serif; color: #a6a6a6; }
.tab { width: 382px; flex: none; display: flex; align-items: center; border-right: 1px solid #4a4a4a; padding-left: 49px; padding-top: 2px; gap: 11px; white-space: nowrap; }
.tab-pin { width: 72px; justify-content: center; padding-left: 0; }
.tab-pin:first-child { width: 70px; }
.tab-active { background: #383838; color: #f2f2f2; margin-top: -2px; border-right: 0; padding-left: 51px; }
.tab-w84 { width: 380px; padding-left: 84px; }
.tab-w55 { padding-left: 55px; width: 383px; gap: 13px; }
.tab-w45 { padding-left: 45px; width: 378px; gap: 7px; }
.tab-w49 { padding-left: 49px; width: 378px; border-right: 0; gap: 9px; }
.fav-pin { width: 32px; height: 30px; }
.fav-u { width: 32px; height: 36px; }
.fav-c { width: 30px; height: 34px; }
.fav-so { width: 24px; height: 36px; }
.fav-gh { width: 36px; height: 36px; }
.fav-box { width: 34px; height: 36px; }

.awsnav { height: 82px; flex: none; background: #232f3e; border-bottom: 3px solid #545b64; display: flex; align-items: center; color: #fff; font-size: 24px; }
.aws-logo { width: 64px; height: 46px; margin-left: 35px; position: relative; }
.aws-word { display: block; font: 400 37px/28px "Noto Sans", sans-serif; letter-spacing: -1px; text-align: center; }
.aws-smile { width: 64px; height: 16px; margin-top: 3px; }
.nav-sep { display: block; width: 1px; height: 44px; background: #414d5c; margin-left: 34px; flex: none; }
.nav-grid { width: 32px; height: 32px; margin-left: 34px; }
.nav-services { margin-left: 16px; width: 124px; }
.nav-search { width: 1079px; height: 58px; background: #16191f; border: 2px solid #879596; border-radius: 3px; display: flex; align-items: center; padding: 0 18px 0 21px; color: #aab7b8; font-size: 28px; letter-spacing: -.15px; }
.nav-search-ic { width: 28px; height: 28px; color: #d5dbdb; }
.nav-search em { margin-left: 21px; flex: 1; white-space: nowrap; }
.nav-term { width: 32px; height: 32px; margin-left: 72px; }
.nav-sep-a { margin-left: 32px; }
.nav-bell { width: 32px; height: 34px; margin-left: 35px; }
.nav-help { width: 32px; height: 32px; margin-left: 35px; }
.nav-region { margin-left: 34px; }
.nav-caret { width: 16px; height: 13px; margin-left: 13px; color: #fff; }
.nav-sep-b { margin-left: 36px; }
.nav-account { margin-left: 32px; white-space: nowrap; letter-spacing: .15px; }
.nav-caret-b { margin-left: 13px; }

/* App */
.app { height: 1282px; flex: none; display: flex; overflow: hidden; background: #f2f3f3; }
.side { width: 502px; flex: none; background: #fff; border-right: 2px solid #e4e7e7; font-size: 28px; color: #545b64; letter-spacing: -.45px; }
.side-head { height: 124px; border-bottom: 2px solid #eaeded; display: flex; align-items: center; justify-content: space-between; padding: 2px 42px 0 64px; }
.side-head h2 { font-size: 35px; font-weight: 700; color: #16191f; letter-spacing: -.7px; }
.side-x { width: 28px; height: 28px; margin-top: -2px; }
.side-list li { height: 60px; line-height: 60px; padding-left: 64px; white-space: nowrap; }
.side-list .sub { padding-left: 104px; }
.side-list .active { color: #e2772f; font-weight: 700; letter-spacing: -.7px; }
.side-first { margin-top: 33px; }
.side-hr { border: 0; height: 2px; background: #eaeded; margin: 40px; }
.side-reg { display: flex; align-items: center; margin-top: 42px; padding-left: 26px; height: 60px; letter-spacing: -.7px; }
.side-reg svg { width: 20px; height: 17px; color: #545b64; }
.side-reg b { margin-left: 16px; }
.side-reglist { margin-top: 2px; }
.side-hr-c { margin-top: 40px; }
.side-fb { display: block; margin: 103px 0 0 42px; color: #545b64; letter-spacing: -.6px; }

.main { position: relative; flex: 1; min-width: 0; font-size: 28px; }
.crumbs { height: 98px; padding: 26px 0 0 78px; display: flex; align-items: center; color: #687078; letter-spacing: -.65px; }
.crumbs a { color: #2b71b5; }
.crumb-ch { width: 18px; height: 30px; margin: 0 24px; color: #aab7b8; }
.columns { display: flex; align-items: flex-start; gap: 40px; padding-left: 38px; }

.stacks { width: 545px; margin-top: 20px; flex: none; background: #fafafa; box-shadow: 0 1px 3px rgba(0,28,36,.25); }
.stacks-head { display: flex; align-items: center; padding: 53px 41px 0 52px; height: 117px; }
.minus { width: 28px; height: 30px; margin-top: -3px; }
.stacks-head h3 { font-size: 36px; margin: -5px 0 0 12px; flex: 1; font-weight: 700; letter-spacing: -.7px; }
.stacks-head h3 span, .panel-top h3 span { font-weight: 400; color: #687078; }
.icon-btn { width: 98px; height: 63px; background: transparent; border: 2px solid #545b64; border-radius: 3px; color: #545b64; display: flex; align-items: center; justify-content: center; padding: 0; }
.icon-btn svg { width: 32px; height: 32px; }
.filter { width: 444px; height: 63px; margin: 51px 0 0 50px; background: #fff; border: 2px solid #aab7b8; border-radius: 3px; display: flex; align-items: center; padding-left: 15px; color: #545b64; }
.filter svg { width: 30px; height: 30px; color: #687078; }
.filter em { margin-left: 19px; white-space: nowrap; }
.stacks-ctrl { display: flex; align-items: flex-start; margin: 51px 0 0 40px; height: 84px; }
.select { width: 213px; height: 63px; background: #fff; border: 2px solid #aab7b8; border-radius: 3px; display: flex; align-items: center; justify-content: space-between; padding: 0 22px 0 17px; }
.select svg { width: 20px; height: 17px; color: #545b64; }
.toggle { width: 47px; height: 32px; margin: 6px 0 0 40px; border-radius: 16px; background: #2f72ba; position: relative; flex: none; }
.toggle i { position: absolute; right: 2px; top: 3px; width: 26px; height: 26px; border-radius: 50%; background: #fff; }
.nested { margin: 0 0 0 16px; line-height: 44px; }
.pager { display: flex; align-items: center; height: 34px; padding-left: 358px; color: #aab7b8; margin-top: -3px; }
.pager svg { width: 18px; height: 30px; }
.pager b { width: 100px; text-align: center; color: #16191f; line-height: 30px; }
.stack-card { margin-top: 44px; height: 194px; background: #f1f8fc; border: 2px solid #3d8fc4; padding: 34px 40px 0 38px; box-shadow: 0 2px 3px rgba(0,28,36,.3); }
.card-top { display: flex; justify-content: space-between; align-items: center; height: 44px; }
.radio { display: block; width: 29px; height: 29px; border-radius: 50%; border: 9px solid #2f72ba; background: #fff; }
.card-date { font-size: 25px; color: #545b64; line-height: 44px; white-space: nowrap; letter-spacing: -.2px; }
.card-status { display: flex; align-items: center; gap: 8px; color: #3a8020; height: 40px; margin-top: 1px; }
.card-status svg { width: 32px; height: 32px; }

.detail { width: 1694px; flex: none; }
.detail-head { height: 64px; display: flex; justify-content: space-between; align-items: center; }
.detail-head h1 { font-size: 56px; font-weight: 400; letter-spacing: -1px; padding-bottom: 16px; }
.actions { display: flex; gap: 18px; }
.btn { height: 64px; background: #fff; border: 2px solid #545b64; border-radius: 3px; font-size: 28px; font-weight: 700; color: #545b64; display: flex; align-items: center; justify-content: center; padding: 0; letter-spacing: -.5px; }
.btn svg { width: 20px; height: 17px; margin-left: 22px; }
.btn-del { width: 170px; }
.btn-upd { width: 182px; }
.btn-act { width: 303px; }
.btn-cre { width: 288px; }
.tabs { width: 1684px; height: 88px; margin-top: 36px; border-bottom: 2px solid #aab7b8; display: flex; align-items: flex-start; font-weight: 700; color: #545b64; letter-spacing: -1px; }
.t { height: 60px; line-height: 60px; padding: 0 41.300px; border-right: 1px solid #aab7b8; white-space: nowrap; }
.t:first-child { padding: 0 44px 0 42px; }
.t-last { border-right: 0; }
.t-on { color: #e2772f; position: relative; }
.t-on::after { content: ""; position: absolute; left: 0; right: 0; top: 82px; height: 5px; background: #16191f; }
.panel { width: 1684px; margin-top: 33px; background: #fff; box-shadow: 0 1px 2px rgba(0,28,36,.25); }
.panel-top { background: #fafafa; height: 129px; display: flex; align-items: flex-end; justify-content: space-between; padding: 0 30px 0 41px; }
.panel-top h3 { font-size: 36px; font-weight: 700; margin-bottom: 35px; letter-spacing: -.7px; }
.panel-top .icon-btn { width: 100px; height: 63px; margin-bottom: 27px; }
.panel-search { background: #fafafa; height: 90px; display: flex; border-bottom: 3px solid #eaeded; padding-left: 41px; }
.ev-search { width: 1454px; height: 60px; background: #fff; border: 2px solid #aab7b8; border-radius: 3px; display: flex; align-items: center; padding-left: 18px; color: #879596; font-size: 28px; }
.ev-search svg { width: 30px; height: 30px; color: #545b64; }
.ev-search em { margin-left: 17px; }
.gear { width: 32px; height: 32px; margin: 14px 0 0 115px; }
.ev-row { display: grid; grid-template-columns: 417px 341px 320px 1fr; height: 108px; border-bottom: 3px solid #eaeded; }
.ev-head { height: 100px; background: #fafafa; font-weight: 700; color: #545b64; align-items: center; letter-spacing: -.85px; padding-top: 2px; }
.th { height: 60px; display: flex; align-items: center; padding-left: 41px; border-right: 1px solid #eaeded; justify-content: space-between; }
.th-first { padding-right: 37px; }
.th-first svg { width: 22px; height: 18px; color: #aab7b8; }
.th-last { border-right: 0; }
.td { align-self: center; padding-left: 41px; line-height: 40px; white-space: nowrap; }
.when { letter-spacing: .5px; }
.nm { letter-spacing: -.5px; padding-left: 40px; }
.st { line-height: 44px; padding-left: 40px; }
.st svg { display: inline-block; width: 32px; height: 32px; margin-right: 8px; vertical-align: -7px; }
.ok { color: #3a8020; }
.prog { color: #2e73b8; }
.scrolltrack { position: absolute; right: 0; top: 96px; width: 46px; bottom: 0; background: #fafafa; border-left: 1px solid #e6e8e8; }
.scrolltrack i { position: absolute; left: 6px; top: 10px; width: 14px; height: 116px; border-radius: 7px; background: #c2c2c2; }

/* Footer */
.foot { height: 58px; flex: none; background: #232f3e; border-top: 3px solid #4d5866; border-bottom: 3px solid #4d5866; border-radius: 0 0 20px 20px; display: flex; align-items: center; color: #fff; font-size: 24px; letter-spacing: -.3px; white-space: nowrap; padding-right: 36px; }
.f-fb { margin-left: 40px; letter-spacing: -.5px; }
.f-msg { margin-left: 49px; color: #aab7b8; }
.f-link { color: #fff; }
.f-ext { width: 27px; height: 27px; margin-left: 6px; }
.f-copy { margin-left: auto; }
.f-l1 { margin-left: 60px; }
.f-l2 { margin-left: 50px; }
.f-l3 { margin-left: 50px; letter-spacing: -.4px; }

/* Dock */
.dock { position: relative; width: 2660px; height: 148px; margin: 10px 0 0 110px; flex: none; border: 2px solid #5b4d5e; border-radius: 40px; background: linear-gradient(90deg, #1a1520 0, #3f2a30 5%, #1c1822 14%, #3d2a2d 23%, #1c1822 33%, #3e2560 38%, #3e2560 48.500%, #5f3a5f 51.500%, #7b4352 65%, #8a4a44 78.500%, #7a4048 83%, #56324a 89.500%, #48284a 100%); padding: 19px 0 0 18px; display: flex; align-items: flex-start; gap: 32.850px; }
.ic { position: relative; width: 94px; height: 95px; flex: none; }
.ic svg { width: 94px; height: 95px; }
.ic-cal { background: #f6f6f4; border-radius: 22px; text-align: center; color: #222; }
.cal-m { display: block; height: 28px; background: #dd5347; color: #fff; border-radius: 22px 22px 0 0; font: 700 17px/28px Roboto, sans-serif; }
.cal-d { display: block; font: 300 62px/66px Roboto, sans-serif; }
.ic-tv { background: #14191a; border-radius: 22px; display: flex; align-items: center; justify-content: center; color: #fff; font: 500 44px Roboto, sans-serif; gap: 3px; }
.ic .tv-apple { width: 24px; height: 30px; margin-top: -3px; }
.dock-sep { width: 1px; height: 106px; background: #a98a90; flex: none; }
.dock-sep-a { margin: 0 11px 0 14px; }
.dock-sep-b { margin: 0 7px 0 15px; }
.badge { position: absolute; right: -16px; top: -11px; width: 44px; height: 44px; border-radius: 50%; background: #e74c3c; color: #fff; text-align: center; font: 24px/44px Roboto, sans-serif; }
.ic-folder svg { width: 98px; height: 106px; margin-top: -11px; }
.ic-trash svg { width: 86px; height: 104px; margin-top: -5px; margin-left: 6px; }
.dot, .dot-bar { position: absolute; top: 136px; height: 7px; background: #e9c9cf; border-radius: 4px; }
.dot { width: 5px; }
.dot-1 { left: 62px; }
.dot-bar { left: 135px; width: 116px; height: 6px; background: #e0c0c6; border: 1px solid #e9d0d4; }
.dot-2 { left: 318px; }
.dot-3 { left: 2023px; }
.dot-4 { left: 2149px; }
```
